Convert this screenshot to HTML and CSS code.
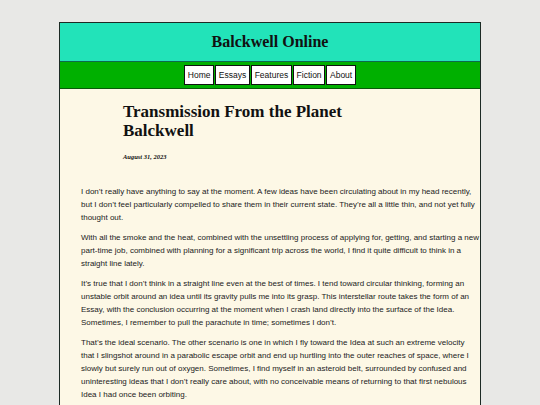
FILE: index.html
```html
<!DOCTYPE html>
<html>
<head>
<meta charset="utf-8">
<link rel="stylesheet" href="styles.css">
</head>
<body>
<div class="page">
  <header class="site-header">
    <h1 class="site-title">Balckwell Online</h1>
  </header>
  <nav class="site-nav">
    <a class="nav-item">Home</a>
    <a class="nav-item">Essays</a>
    <a class="nav-item">Features</a>
    <a class="nav-item">Fiction</a>
    <a class="nav-item">About</a>
  </nav>
  <main class="content">
    <div class="article-head">
      <h2 class="article-title">Transmission From the Planet Balckwell</h2>
      <p class="article-date">August 31, 2023</p>
    </div>
    <div class="article-body">
      <p>I don’t really have anything to say at the moment. A few ideas have been circulating about in my head recently, but I don’t feel particularly compelled to share them in their current state. They’re all a little thin, and not yet fully thought out.</p>
      <p>With all the smoke and the heat, combined with the unsettling process of applying for, getting, and starting a new part-time job, combined with planning for a significant trip across the world, I find it quite difficult to think in a straight line lately.</p>
      <p>It’s true that I don’t think in a straight line even at the best of times. I tend toward circular thinking, forming an unstable orbit around an idea until its gravity pulls me into its grasp. This interstellar route takes the form of an Essay, with the conclusion occurring at the moment when I crash land directly into the surface of the Idea. Sometimes, I remember to pull the parachute in time; sometimes I don’t.</p>
      <p>That’s the ideal scenario. The other scenario is one in which I fly toward the Idea at such an extreme velocity that I slingshot around in a parabolic escape orbit and end up hurtling into the outer reaches of space, where I slowly but surely run out of oxygen. Sometimes, I find myself in an asteroid belt, surrounded by confused and uninteresting ideas that I don’t really care about, with no conceivable means of returning to that first nebulous Idea I had once been orbiting.</p>
    </div>
  </main>
</div>
</body>
</html>
```

FILE: styles.css
```css
html, body {
  margin: 0;
  padding: 0;
  background: #e8e8e6;
}
body {
  padding-top: 22px;
}
.page {
  width: 420px;
  margin: 0 auto;
  border: 1px solid #1c2a24;
  border-bottom: none;
  background: #fdf8e6;
  min-height: 400px;
}
.site-header {
  background: #22e3b9;
  height: 38px;
  display: flex;
  align-items: center;
  justify-content: center;
  border-bottom: 1px solid #0d6b4a;
}
.site-title {
  margin: 0;
  font-family: "Liberation Serif", serif;
  font-weight: bold;
  font-size: 16px;
  color: #111;
}
.site-nav {
  background: #00b000;
  height: 26px;
  display: flex;
  justify-content: center;
  align-items: center;
  gap: 1px;
  border-bottom: 1px solid #0a5a0a;
}
.nav-item {
  background: #fff;
  border: 1px solid #111;
  font-family: "Liberation Sans", Arial, sans-serif;
  font-size: 8.5px;
  color: #111;
  padding: 0 2.7px;
  height: 18px;
  line-height: 18px;
}
.content {
  padding: 13px 0 10px 21px;
}
.article-head {
  padding-left: 42px;
  width: 240px;
}
.article-title {
  margin: 0;
  font-family: "Liberation Serif", serif;
  font-weight: bold;
  font-size: 17px;
  line-height: 19px;
  color: #111;
}
.article-date {
  margin: 13px 0 0;
  font-family: "Liberation Serif", serif;
  font-weight: bold;
  font-style: italic;
  font-size: 6.5px;
  color: #111;
}
.article-body {
  margin-top: 25px;
  font-family: "Liberation Sans", Arial, sans-serif;
  font-size: 8px;
  line-height: 13px;
  color: #222;
}
.article-body p {
  margin: 0 0 7px;
}
```
